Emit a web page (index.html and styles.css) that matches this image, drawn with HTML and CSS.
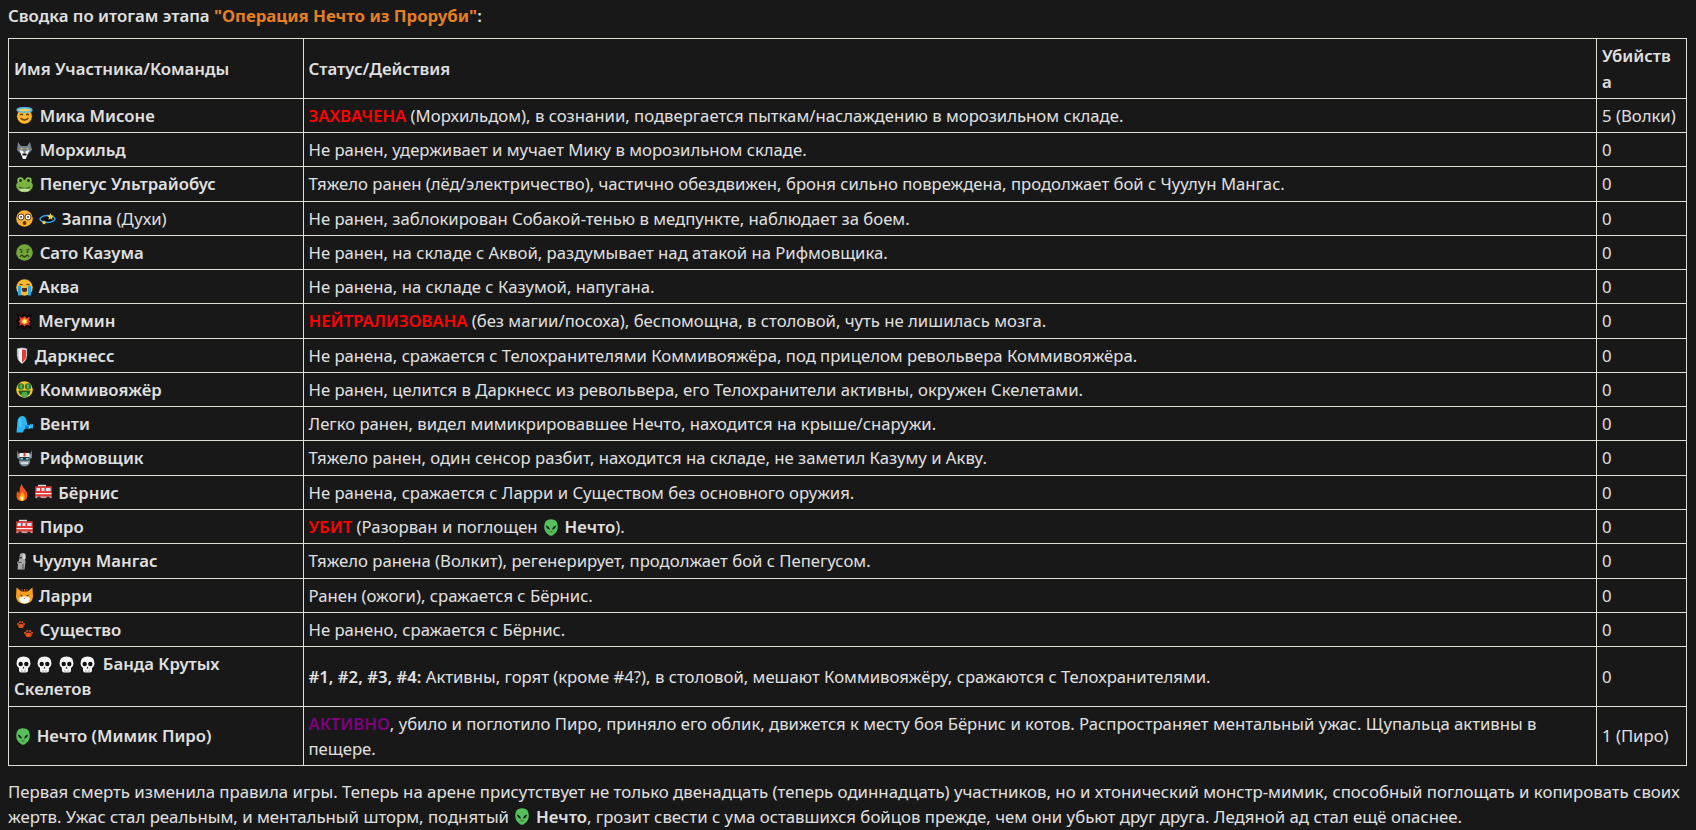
FILE: index.html
```html
<!DOCTYPE html>
<html lang="ru">
<head>
<meta charset="utf-8">
<title>Сводка</title>
<link rel="stylesheet" href="styles.css">
</head>
<body>
<svg class="defs" aria-hidden="true">
<defs>
<g id="mika"><circle cx="8.5" cy="9.300" r="7.700" fill="#fbb92f" stroke="#2a1a05" stroke-width=".5"/><ellipse cx="8.500" cy="3" rx="7.300" ry="2.200" fill="#fbd24e" stroke="#58b6ea" stroke-width="1.700"/><path d="M4 8q1.500-1.500 3 0M10 8q1.500-1.500 3 0M4.500 11q4 4 8 0" fill="none" stroke="#6b3d10" stroke-width="1.200"/></g>
<g id="wolf"><path d="M2 0l3 4h6l3-4 2 8-4 4-2 5H7l-2-5-4-4z" fill="#77838b"/><path d="M3.500 8l3.500 1 1.500 3 1.500-3 3.500-1-2 4-2 5H7l-2-5z" fill="#f5f5f5"/><rect x="6.500" y="11.500" width="4" height="2" fill="#111"/><path d="M4.500 6h2v1.200h-2zM10.500 6h2v1.200h-2z" fill="#f5c542"/></g>
<g id="frog"><circle cx="4.500" cy="4.500" r="3.200" fill="#8bc34a"/><circle cx="12.500" cy="4.500" r="3.200" fill="#8bc34a"/><ellipse cx="8.500" cy="10" rx="8.300" ry="6.200" fill="#7cb342"/><circle cx="4.500" cy="4.500" r="1.400" fill="#1b2b0a"/><circle cx="12.500" cy="4.500" r="1.400" fill="#1b2b0a"/><path d="M3 11q5.500 3 11 0" fill="none" stroke="#33691e" stroke-width="1.200"/><ellipse cx="8.500" cy="14" rx="5" ry="1.500" fill="#c5e1a5"/></g>
<g id="dizzy"><circle cx="8.500" cy="8.500" r="8.300" fill="#fbb02d"/><circle cx="5" cy="7" r="3" fill="#fff" stroke="#5d3a10"/><circle cx="12" cy="7" r="3" fill="#fff" stroke="#5d3a10"/><circle cx="5" cy="7" r="1" fill="#5d3a10"/><circle cx="12" cy="7" r="1" fill="#5d3a10"/><ellipse cx="8.500" cy="13" rx="1.800" ry="2" fill="#5d2a10"/></g>
<g id="spin"><ellipse cx="8.500" cy="9" rx="7.500" ry="3.500" fill="#0a0a14" stroke="#35a7f0" stroke-width="1.400"/><path d="M11.500 3l1 2.500 2.500.3-2 1.700.6 2.500-2.100-1.400-2.100 1.400.6-2.500-2-1.700 2.500-.3z" fill="#fdd835"/><path d="M5 10l.7 1.600 1.700.2-1.300 1.100.4 1.700L5 13.700l-1.500.9.400-1.700-1.300-1.100 1.700-.2z" fill="#fdd835"/></g>
<g id="sick"><circle cx="8.500" cy="8.500" r="8.300" fill="#72a83a"/><path d="M3.500 5l3 1.500M13.500 5l-3 1.500" stroke="#26400e" stroke-width="1.200"/><circle cx="5.500" cy="8" r="1" fill="#26400e"/><circle cx="11.500" cy="8" r="1" fill="#26400e"/><path d="M4 13q1.500-3 3-1t3 0 3 1" fill="none" stroke="#26400e" stroke-width="1.300"/></g>
<g id="sob"><circle cx="8.500" cy="8.500" r="8.300" fill="#fbb92f"/><path d="M3.500 6q1.500-1.500 3 0M10.500 6q1.500-1.500 3 0" fill="none" stroke="#5d3a10" stroke-width="1.100"/><path d="M2 7h3v9.500H2zM12 7h3v9.500h-3z" fill="#29a8e8"/><path d="M6 9h5v3q-2.500 2-5 0z" fill="#5d2a10"/></g>
<g id="boom"><path d="M0 0l5 3 3.500-3 3 3 5-3-2 6 2 2.500-2.500 2 2.500 6-5.500-3-3 3-3-3-5 3 2-5.500L0 8l2.500-2.500z" fill="#050505"/><path d="M3 3l3 2 2.500-2 2.500 2 3-1.500-1 3.500 1.500 1.500-1.500 1.500 1 3-3-1.500-2.500 2-2.500-2-3 1.500 1-3-1.500-1.500L4 7z" fill="#e53935"/><path d="M8.500 5l1.500 1.500h2L11 8.500l1 1.500-2 .3-1.500 1.500L7 10.300 5 10l1-1.500-1-2h2z" fill="#ffb300"/><circle cx="8.500" cy="8.500" r="2" fill="#fff59d"/></g>
<g id="shield"><path d="M1 1.500Q6 0 11 1.500v7q0 5-5 8.500-5-3.500-5-8.500z" fill="#f2f2f2" stroke="#555" stroke-width=".6"/><path d="M6 2.500q2.500 0 4 .6v5.400q0 4-4 7z" fill="#e53935"/><path d="M2 3v5.500q0 1 .5 2.500" fill="none" stroke="#9fb8c8"/></g>
<g id="money"><circle cx="8.500" cy="8.500" r="8.300" fill="#fbc52e"/><circle cx="5" cy="5.500" r="3.200" fill="#2e7d32"/><circle cx="12" cy="5.500" r="3.200" fill="#2e7d32"/><path d="M5 3.500v4M12 3.500v4" stroke="#a5d66a"/><path d="M2.500 9.500h12q-.5 4-3 5h-6q-2.500-1-3-5z" fill="#1b5e20"/><rect x="5.500" y="11" width="6" height="5.500" rx="2" fill="#4caf50"/></g>
<g id="wind"><path d="M.5 16.500L1.500 5q.5-4.500 4.500-5 3.500 0 4.500 4.500l1 4.500h2l1-1.500 1 1 1.500-.5v4.500l-1.500-.5-1.500 1-2-.5-4 1-1 3z" fill="#29b6f6"/><path d="M9 9.500l5 .5v2.500l-5 .5z" fill="#0277bd"/><path d="M3 3h2.500v8H3z" fill="#4fc3f7"/><circle cx="13.500" cy="11" r=".8" fill="#e1f5fe"/></g>
<g id="robot"><path d="M1 0l2 4h11l2-4v8l-2 1v4q-2 3.500-5.500 3.500T3 13V9L1 8z" fill="#8a9aa4" stroke="#222" stroke-width=".4"/><path d="M3.500 3h10v4h-10z" fill="#eceff1"/><rect x="7.500" y="2.500" width="2" height="4" fill="#e53935"/><rect x="3.500" y="7" width="10" height="3.500" rx="1" fill="#263238"/><rect x="4.500" y="8" width="2.500" height="1.500" fill="#80deea"/><rect x="10" y="8" width="2.500" height="1.500" fill="#80deea"/><path d="M5 12h7v2H5z" fill="#cfd8dc"/></g>
<g id="fire"><path d="M5.500 0q1 3 3.500 5.500t2.500 6q-.5 5.500-5.500 5.500T.5 12.500Q0 9 2 6.500q0 2 1.500 2.500Q3 4 5.500 0z" fill="#f4511e"/><path d="M6 7q1 2 2 3.500t.5 3.500q-.5 3-2.500 3t-3-2.500q0-2 1.500-3.500Q6 9 6 7z" fill="#ffb300"/><ellipse cx="6" cy="14.500" rx="1.500" ry="2" fill="#fff59d"/></g>
<g id="truck"><rect x="0" y="2" width="17" height="12.500" fill="#e53935" stroke="#111" stroke-width=".5"/><rect x="3" y=".8" width="8" height="1.400" fill="#ddd"/><path d="M1.500 4h3.500v3H1.500zM6.500 4h3v3h-3zM11 4h4.500v3H11z" fill="#cfe8f5"/><rect x=".5" y="9" width="16" height="1.200" fill="#f5f5f5"/><rect x=".5" y="12.500" width="16" height="1.300" fill="#bdbdbd"/><circle cx="4" cy="14.500" r="2" fill="#222"/><circle cx="13" cy="14.500" r="2" fill="#222"/></g>
<g id="moai"><path d="M4 1q3-2 5.500 0l.5 4-1 1.500.5 2.500-1 7.500H1.500l.5-5L1 10l2-2.500z" fill="#a8a8a8"/><path d="M3 4h3v1.500H3zM2.500 9h3v1H2.500z" fill="#444"/><path d="M7 1h2v5H7z" fill="#d6d6d6"/><path d="M6 11h2v5H6z" fill="#777"/></g>
<g id="cat"><path d="M.5 .5l5 4h6l5-4 .5 9.500q-1 6.800-8.500 6.800T0 10z" fill="#f9a024"/><path d="M3 12q1-3 5.500-2.500Q13 9 14 12q-1.500 4.500-5.500 4.500T3 12z" fill="#fff"/><path d="M3.500 7.500l3 .8-.5 1.200zM13.500 7.500l-3 .8.500 1.200z" fill="#3e2410"/><path d="M7.500 11h2l-1 1z" fill="#d84315"/><path d="M6 2v3M8.500 2v3M11 2v3" stroke="#c65f10" stroke-width=".9"/></g>
<g id="paw"><circle cx="2" cy="3" r="1" fill="#e8501a"/><circle cx="3.800" cy="1.200" r="1" fill="#e8501a"/><circle cx="6.300" cy="1.200" r="1" fill="#e8501a"/><circle cx="8" cy="3" r="1" fill="#e8501a"/><ellipse cx="5" cy="5" rx="2.800" ry="2.100" fill="#e8501a"/><ellipse cx="12.500" cy="13.800" rx="3.200" ry="2.400" fill="#e8501a"/><circle cx="9" cy="11.800" r="1.100" fill="#e8501a"/><circle cx="11.200" cy="10" r="1.100" fill="#e8501a"/><circle cx="14" cy="10" r="1.100" fill="#e8501a"/><circle cx="16" cy="11.800" r="1" fill="#e8501a"/></g>
<g id="skull"><path d="M7.500.5q7 0 7 7 0 3-2.500 4.500v2.500q0 2-2 2h-5q-2 0-2-2V12Q.5 10.500.5 7.500q0-7 7-7z" fill="#f7f7f7"/><circle cx="4.700" cy="8" r="2.200" fill="#111"/><circle cx="10.300" cy="8" r="2.200" fill="#111"/><path d="M7.500 10.500l1 2h-2z" fill="#111"/><path d="M6 14v2.500M9 14v2.500" stroke="#888" stroke-width=".7"/></g>
<g id="alien"><path d="M7 .2q6.800 0 6.800 7.300 0 5-3.800 7.700-1.500 1.600-3 1.600T4 15.200Q.2 12.500.2 7.500.2.200 7 .2z" fill="#57c05c"/><path d="M1.800 6.500q3.200.5 4.200 4.200-3.200-.5-4.200-4.200zM12.200 6.500q-3.200.5-4.200 4.200 3.200-.5 4.200-4.200z" fill="#0d1f0e"/><path d="M5.500 12.800h3" stroke="#1b5e20" stroke-width=".8"/></g>
</defs>
</svg>
<p class="title"><strong>Сводка по итогам этапа <span class="orange">"Операция Нечто из Проруби"</span>:</strong></p>
<table>
<thead>
<tr><th class="c1">Имя Участника/Команды</th><th class="c2">Статус/Действия</th><th class="c3">Убийства</th></tr>
</thead>
<tbody>
<tr><td><strong><svg class="e" viewBox="0 0 17 17"><use href="#mika"/></svg> Мика Мисоне</strong></td><td><strong class="red">ЗАХВАЧЕНА</strong> (Морхильдом), в сознании, подвергается пыткам/наслаждению в морозильном складе.</td><td>5 (Волки)</td></tr>
<tr><td><strong><svg class="e" viewBox="0 0 17 17"><use href="#wolf"/></svg> Морхильд</strong></td><td>Не ранен, удерживает и мучает Мику в морозильном складе.</td><td>0</td></tr>
<tr><td><strong><svg class="e" viewBox="0 0 17 17"><use href="#frog"/></svg> Пепегус Ультрайобус</strong></td><td>Тяжело ранен (лёд/электричество), частично обездвижен, броня сильно повреждена, продолжает бой с Чуулун Мангас.</td><td>0</td></tr>
<tr><td><strong><svg class="e" viewBox="0 0 17 17"><use href="#dizzy"/></svg><svg class="e e-spin" viewBox="0 0 17 17"><use href="#spin"/></svg> Заппа</strong> (Духи)</td><td>Не ранен, заблокирован Собакой-тенью в медпункте, наблюдает за боем.</td><td>0</td></tr>
<tr><td><strong><svg class="e" viewBox="0 0 17 17"><use href="#sick"/></svg> Сато Казума</strong></td><td>Не ранен, на складе с Аквой, раздумывает над атакой на Рифмовщика.</td><td>0</td></tr>
<tr><td><strong><svg class="e e-tight" viewBox="0 0 17 17"><use href="#sob"/></svg> Аква</strong></td><td>Не ранена, на складе с Казумой, напугана.</td><td>0</td></tr>
<tr><td><strong><svg class="e e-boom" viewBox="0 0 17 17"><use href="#boom"/></svg> Мегумин</strong></td><td><strong class="red">НЕЙТРАЛИЗОВАНА</strong> (без магии/посоха), беспомощна, в столовой, чуть не лишилась мозга.</td><td>0</td></tr>
<tr><td><strong><svg class="e e-shield" viewBox="0 0 12 17"><use href="#shield"/></svg> Даркнесс</strong></td><td>Не ранена, сражается с Телохранителями Коммивояжёра, под прицелом револьвера Коммивояжёра.</td><td>0</td></tr>
<tr><td><strong><svg class="e" viewBox="0 0 17 17"><use href="#money"/></svg> Коммивояжёр</strong></td><td>Не ранен, целится в Даркнесс из револьвера, его Телохранители активны, окружен Скелетами.</td><td>0</td></tr>
<tr><td><strong><svg class="e" viewBox="0 0 17 17"><use href="#wind"/></svg> Венти</strong></td><td>Легко ранен, видел мимикрировавшее Нечто, находится на крыше/снаружи.</td><td>0</td></tr>
<tr><td><strong><svg class="e" viewBox="0 0 17 17"><use href="#robot"/></svg> Рифмовщик</strong></td><td>Тяжело ранен, один сенсор разбит, находится на складе, не заметил Казуму и Акву.</td><td>0</td></tr>
<tr><td><strong><svg class="e e-fire" viewBox="0 0 12 17"><use href="#fire"/></svg><svg class="e" viewBox="0 0 17 17"><use href="#truck"/></svg> Бёрнис</strong></td><td>Не ранена, сражается с Ларри и Существом без основного оружия.</td><td>0</td></tr>
<tr><td><strong><svg class="e" viewBox="0 0 17 17"><use href="#truck"/></svg> Пиро</strong></td><td><strong class="red">УБИТ</strong> (Разорван и поглощен <strong><svg class="e e-alien" viewBox="0 0 14 17"><use href="#alien"/></svg> Нечто</strong>).</td><td>0</td></tr>
<tr><td><strong><svg class="e e-moai" viewBox="0 0 10 17"><use href="#moai"/></svg> Чуулун Мангас</strong></td><td>Тяжело ранена (Волкит), регенерирует, продолжает бой с Пепегусом.</td><td>0</td></tr>
<tr><td><strong><svg class="e e-tight" viewBox="0 0 17 17"><use href="#cat"/></svg> Ларри</strong></td><td>Ранен (ожоги), сражается с Бёрнис.</td><td>0</td></tr>
<tr><td><strong><svg class="e" viewBox="0 0 17 17"><use href="#paw"/></svg> Существо</strong></td><td>Не ранено, сражается с Бёрнис.</td><td>0</td></tr>
<tr><td><strong><svg class="e e-skull" viewBox="0 0 15 17"><use href="#skull"/></svg> <svg class="e e-skull" viewBox="0 0 15 17"><use href="#skull"/></svg> <svg class="e e-skull" viewBox="0 0 15 17"><use href="#skull"/></svg> <svg class="e e-skull e-skull-last" viewBox="0 0 15 17"><use href="#skull"/></svg> Банда Крутых Скелетов</strong></td><td><strong>#1, #2, #3, #4:</strong> Активны, горят (кроме #4?), в столовой, мешают Коммивояжёру, сражаются с Телохранителями.</td><td>0</td></tr>
<tr><td><strong><svg class="e e-alien" viewBox="0 0 14 17"><use href="#alien"/></svg> Нечто (Мимик Пиро)</strong></td><td><strong class="purple">АКТИВНО</strong>, убило и поглотило Пиро, приняло его облик, движется к месту боя Бёрнис и котов. Распространяет ментальный ужас. Щупальца активны в пещере.</td><td>1 (Пиро)</td></tr>
</tbody>
</table>
<p class="outro">Первая смерть изменила правила игры. Теперь на арене присутствует не только двенадцать (теперь одиннадцать) участников, но и хтонический монстр-мимик, способный поглощать и копировать своих жертв. Ужас стал реальным, и ментальный шторм, поднятый <strong><svg class="e e-alien" viewBox="0 0 14 17"><use href="#alien"/></svg> Нечто</strong>, грозит свести с ума оставшихся бойцов прежде, чем они убьют друг друга. Ледяной ад стал ещё опаснее.</p>
</body>
</html>
```
FILE: styles.css
```css
html, body { margin: 0; padding: 0; background: #181818; }
body {
  padding: 0 8px;
  color: #e0e0e0;
  font-family: "Noto Sans", sans-serif;
  font-size: 16.8px;
  line-height: 25.2px;
  overflow: hidden;
}
.defs { display: block; width: 0; height: 0; }
.title { margin: 0; padding-top: 3.4px; padding-bottom: 9.7px; }
strong, th { font-weight: 600; }
.orange { color: #e67e22; font-weight: 700; }
.red { color: #ff0000; }
.purple { color: #800080; }
table { width: 1679px; border-collapse: collapse; table-layout: fixed; overflow-wrap: anywhere; font-size: 16.7px; line-height: 25.27px; }
th, td { border: 1px solid #e0e0d8; padding: 4px 5px; text-align: left; }
th { font-size: 16.8px; }
.c1 { width: 283.5px; }
th.c3 { width: 72px; padding-right: 12px; }
.outro { margin: 12.6px 0 0; }
.e { width: 17px; height: 17px; margin: 0 2.3px 0 2px; vertical-align: -2.5px; }
.e-spin { margin: 0 1.5px 0 3.7px; }
.e-tight { margin-right: 1.5px; }
.e-boom { margin-right: 1px; }
.e-shield { width: 12px; margin-right: 2.5px; }
.e-fire { width: 12px; margin-right: 4.5px; }
.e-moai { width: 10px; margin-right: 2px; }
.e-skull { width: 15px; margin: 0 0 0 2px; }
.e-skull-last { margin-right: 3.5px; }
.e-alien { width: 14px; margin-right: 2.300px; }
```
